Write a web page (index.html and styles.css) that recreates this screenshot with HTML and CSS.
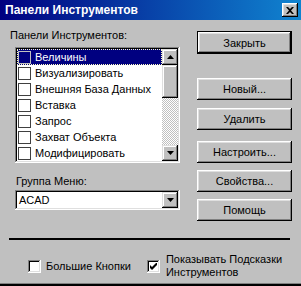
FILE: index.html
```html
<!DOCTYPE html>
<html lang="ru">
<head>
  <meta charset="UTF-8" />
  <meta name="viewport" content="width=device-width, initial-scale=1.0"/>
  <title>Панели Инструментов</title>
  <link rel="stylesheet" href="styles.css">
</head>
<body>

  <div class="window">
    <!-- Заголовок окна -->
    <div class="titlebar">
      <span class="title">Панели Инструментов</span>
      <span class="close-btn">
        <svg width="8" height="7" viewBox="0 0 8 7"><path d="M0 0h2l2 2 2-2h2L5 3.5 8 7H6L4 5 2 7H0l3-3.5z" fill="#000"/></svg>
      </span>
    </div>

    <div class="content">
      <div class="main">
        <div class="left">
          <div class="caption">Панели Инструментов:</div>
          <div class="listbox">
            <ul class="items">
              <li class="item selected"><span class="box"></span>Величины</li>
              <li class="item"><span class="box"></span>Визуализировать</li>
              <li class="item"><span class="box"></span>Внешняя База Данных</li>
              <li class="item"><span class="box"></span>Вставка</li>
              <li class="item"><span class="box"></span>Запрос</li>
              <li class="item"><span class="box"></span>Захват Объекта</li>
              <li class="item"><span class="box"></span>Модифицировать</li>
            </ul>
            <div class="scrollbar">
              <span class="raised arrow-btn">
                <svg width="7" height="4" viewBox="0 0 7 4"><path d="M3.5 0L7 4H0z" fill="#000"/></svg>
              </span>
              <span class="raised thumb"></span>
              <span class="track"></span>
              <span class="raised arrow-btn">
                <svg width="7" height="4" viewBox="0 0 7 4"><path d="M0 0h7L3.5 4z" fill="#000"/></svg>
              </span>
            </div>
          </div>

          <div class="caption menu-caption">Группа Меню:</div>
          <div class="combo">
            <span class="combo-value">ACAD</span>
            <span class="raised arrow-btn">
              <svg width="7" height="4" viewBox="0 0 7 4"><path d="M0 0h7L3.5 4z" fill="#000"/></svg>
            </span>
          </div>
        </div>

        <div class="right">
          <button class="btn default btn-close">Закрыть</button>
          <button class="btn btn-new">Новый...</button>
          <button class="btn btn-delete">Удалить</button>
          <button class="btn btn-setup">Настроить...</button>
          <button class="btn btn-props">Свойства...</button>
          <button class="btn btn-help">Помощь</button>
        </div>
      </div>

      <div class="separator"></div>

      <div class="options">
        <label class="option">
          <span class="check"></span>
          <span>Большие Кнопки</span>
        </label>
        <label class="option option-tips">
          <span class="check">
            <svg width="7" height="7" viewBox="0 0 7 7"><path d="M0 2v3l2 2 5-5V-1L2 4z" fill="#000"/></svg>
          </span>
          <span>Показывать Подсказки<br>Инструментов</span>
        </label>
      </div>
    </div>
  </div>

</body>
</html>
```

FILE: styles.css
```css
:root {
  --face: #c0c0c0;
  --light: #dfdfdf;
  --shade: #808080;
  --navy: #000080;
}

* {
  box-sizing: border-box;
}

body {
  margin: 0;
  padding: 0;
  font-family: 'Liberation Sans', Arial, sans-serif;
  font-size: 11px;
  color: #000;
  background: var(--face);
}

.window {
  width: 301px;
  height: 286px;
  background: var(--face);
  box-shadow: inset 0 -2px #000, inset 0 -3px var(--shade);
  display: flex;
  flex-direction: column;
}

/* заголовок */
.titlebar {
  height: 20px;
  display: flex;
  align-items: center;
  justify-content: space-between;
  padding: 0 3px 0 5px;
  background: linear-gradient(90deg, var(--navy), #1084d0);
  color: #fff;
  font-weight: bold;
  font-size: 12px;
}

.close-btn {
  width: 16px;
  height: 14px;
  display: flex;
  align-items: center;
  justify-content: center;
  background: var(--face);
  box-shadow: inset -1px -1px #000, inset 1px 1px #fff, inset -2px -2px var(--shade), inset 2px 2px var(--light);
}

.raised {
  background: var(--face);
  box-shadow: inset -1px -1px #000, inset 1px 1px var(--light), inset -2px -2px var(--shade), inset 2px 2px #fff;
}

.content {
  padding: 9px 9px 0 9px;
}

.main {
  display: flex;
  justify-content: space-between;
}

.left {
  width: 171px;
}

.caption {
  line-height: 13px;
  padding-left: 1px;
  margin-bottom: 5px;
}

.menu-caption {
  margin-top: 12px;
  margin-bottom: 2px;
  padding-left: 7px;
}

/* список */
.listbox {
  margin-left: 6px;
  width: 165px;
  height: 116px;
  padding: 2px;
  background: #fff;
  display: flex;
  box-shadow: inset -1px -1px #fff, inset 1px 1px var(--shade), inset -2px -2px var(--light), inset 2px 2px #000;
}

.items {
  list-style: none;
  margin: 0;
  padding: 0;
  flex: 1;
}

.item {
  height: 16px;
  display: flex;
  align-items: center;
  padding-left: 1px;
  white-space: nowrap;
  overflow: hidden;
}

.item .box {
  width: 13px;
  height: 13px;
  margin-right: 4px;
  border: 1px solid #404040;
  background: #fff;
  flex-shrink: 0;
}

.item.selected {
  background: var(--navy);
  color: #fff;
  outline: 1px dotted #ffffc0;
  outline-offset: -1px;
}

.item.selected .box {
  background: var(--navy);
  border-color: #c0c0c0;
}

.scrollbar {
  width: 16px;
  display: flex;
  flex-direction: column;
}

.arrow-btn {
  width: 16px;
  height: 16px;
  display: flex;
  align-items: center;
  justify-content: center;
  flex-shrink: 0;
}

.thumb {
  height: 33px;
}

.track {
  flex: 1;
  background: repeating-conic-gradient(#fff 0 25%, var(--face) 0 50%) 0 0 / 2px 2px;
}

/* комбо */
.combo {
  margin-left: 6px;
  width: 165px;
  height: 20px;
  padding: 2px;
  background: #fff;
  display: flex;
  align-items: center;
  box-shadow: inset -1px -1px #fff, inset 1px 1px var(--shade), inset -2px -2px var(--light), inset 2px 2px #000;
}

.combo-value {
  flex: 1;
  padding-left: 2px;
}

/* кнопки */
.right {
  width: 95px;
  display: flex;
  flex-direction: column;
}

.btn {
  height: 22px;
  padding: 0;
  border: none;
  font-family: inherit;
  font-size: 11px;
  color: #000;
  background: var(--face);
  box-shadow: inset -1px -1px #000, inset 1px 1px #fff, inset -2px -2px var(--shade), inset 2px 2px var(--light);
}

.btn.default {
  border: 1px solid #000;
  height: 23px;
}

.btn-close { margin-top: 2px; }
.btn-new { margin-top: 24px; }
.btn-delete { margin-top: 8px; }
.btn-setup { margin-top: 11px; }
.btn-props { margin-top: 7px; }
.btn-help { margin-top: 7px; }

.separator {
  margin-top: 17px;
  margin-right: 2px;
  height: 2px;
  background: #000;
}

/* флажки */
.options {
  display: flex;
  align-items: center;
  margin-top: 13px;
  padding-left: 19px;
  height: 26px;
}

.option {
  display: flex;
  align-items: center;
  gap: 5px;
  line-height: 13px;
}

.option-tips {
  margin-left: 16px;
  gap: 6px;
}

.check {
  width: 13px;
  height: 13px;
  flex-shrink: 0;
  background: #fff;
  display: flex;
  align-items: center;
  justify-content: center;
  box-shadow: inset -1px -1px #fff, inset 1px 1px var(--shade), inset -2px -2px var(--light), inset 2px 2px #000;
}
```
